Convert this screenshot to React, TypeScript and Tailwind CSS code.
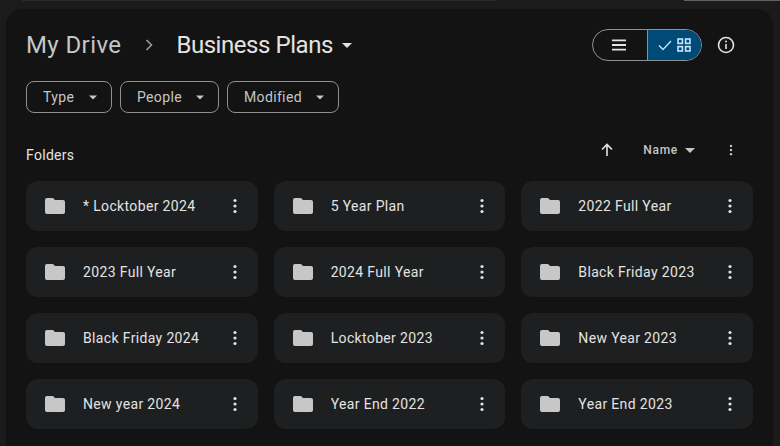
const folders = ["* Locktober 2024","5 Year Plan","2022 Full Year","2023 Full Year","2024 Full Year","Black Friday 2023","Black Friday 2024","Locktober 2023","New Year 2023","New year 2024","Year End 2022","Year End 2023"];

function Caret({ className = "" }: { className?: string }) {
  return <svg width="10" height="5" viewBox="0 0 10 5" className={className} fill="currentColor"><path d="M0 0h10L5 5z" /></svg>;
}
function Dots({ className = "" }: { className?: string }) {
  return (
    <svg width="24" height="24" viewBox="0 0 24 24" className={className} fill="currentColor">
      <circle cx="12" cy="6.5" r="1.6" /><circle cx="12" cy="12" r="1.6" /><circle cx="12" cy="17.5" r="1.6" />
    </svg>
  );
}
function Filter({ label, w }: { label: string; w: string }) {
  return (
    <div className={`flex h-8 items-center justify-between rounded-lg border border-[#8e918f] pl-4 pr-[14px] text-sm tracking-[0.35px] text-[#c4c7c5] ${w}`}>
      <span>{label}</span>
      <Caret className="w-2 text-[#c4c7c5]" />
    </div>
  );
}

export default function App() {
  return (
    <div className="h-[446px] w-[780px] overflow-hidden bg-[#1b1b1b] font-['Roboto',sans-serif]">
      <div className="flex h-px">
        <div className="ml-[22px] w-[473px] bg-[#2a2b2c]" />
        <div className="ml-auto w-[96px] bg-[#5f6368]" />
      </div>
      <div className="ml-[6px] mt-2 h-[437px] w-[767px] rounded-t-2xl bg-[#131314] pl-5 pr-5">
        <div className="flex h-[72px] items-center pb-[1px] pt-[1px]">
          <span className="text-2xl tracking-[0.4px] text-[#c4c7c5]">My Drive</span>
          <svg width="12" height="12" viewBox="0 0 12 12" className="ml-[22px] text-[#9aa0a6]" fill="none" stroke="currentColor" strokeWidth="1.5"><path d="M3.5 1 8.5 6l-5 5" /></svg>
          <span className="ml-[21px] text-2xl tracking-[-0.45px] text-[#e3e3e3]">Business Plans</span>
          <Caret className="ml-[9px] text-[#e3e3e3]" />
          <div className="ml-auto mr-[16px] flex items-center">
            <div className="flex h-8 w-[110px] overflow-hidden rounded-full border border-[#8e918f]">
              <div className="flex w-[55px] items-center justify-center border-r border-[#8e918f] pr-[2px]">
                <svg width="16" height="14" viewBox="0 0 16 14" className="text-[#e3e3e3]" fill="currentColor"><path d="M1 1.5h14V3.2H1zM1 6.1h14v1.8H1zM1 10.8h14v1.7H1z" /></svg>
              </div>
              <div className="flex flex-1 items-center justify-center gap-[5px] bg-[#004a77] text-[#c2e7ff]">
                <svg width="14" height="12" viewBox="0 0 14 12" fill="none" stroke="currentColor" strokeWidth="1.3"><path d="M1 6.5 5 10.5 13 2" /></svg>
                <svg width="14" height="14" viewBox="0 0 14 14" fill="none" stroke="currentColor" strokeWidth="1.6"><rect x="1" y="1" width="4.4" height="4.4" /><rect x="8.6" y="1" width="4.4" height="4.4" /><rect x="1" y="8.6" width="4.4" height="4.4" /><rect x="8.6" y="8.6" width="4.4" height="4.4" /></svg>
              </div>
            </div>
            <svg width="18" height="18" viewBox="0 0 18 18" className="ml-[15px] mr-[2px] text-[#e3e3e3]" fill="none" stroke="currentColor" strokeWidth="1.6">
              <circle cx="9" cy="9" r="7.5" /><path d="M9 8v5" /><circle cx="9" cy="5.4" r="1" fill="currentColor" stroke="none" />
            </svg>
          </div>
        </div>
        <div className="flex gap-2">
          <Filter label="Type" w="w-[86px]" />
          <Filter label="People" w="w-[99px]" />
          <Filter label="Modified" w="w-[112px]" />
        </div>
        <div className="flex h-[68px] items-center pt-[5px]">
          <span className="mt-[11px] text-sm tracking-[0.3px] text-[#e3e3e3]">Folders</span>
          <div className="ml-auto mr-[7px] mt-px flex items-center text-[#c4c7c5]">
            <svg width="14" height="14" viewBox="0 0 14 14" className="text-[#e3e3e3]" fill="none" stroke="currentColor" strokeWidth="1.6"><path d="M7 13V2M2 6.5 7 1.5l5 5" /></svg>
            <span className="ml-[29px] text-xs font-medium tracking-[0.7px] text-[#c4c7c5]">Name</span>
            <Caret className="ml-[7px] text-[#c4c7c5]" />
            <Dots className="ml-6 mr-[3px] scale-75 text-[#c4c7c5]" />
          </div>
        </div>
        <div className="grid grid-cols-3 gap-4">
          {folders.map((f) => (
            <div key={f} className="flex h-[50px] items-center rounded-xl bg-[#1e1f20] pl-[19px] pr-[11px]">
              <svg width="20" height="16" viewBox="0 0 20 16" className="shrink-0 text-[#c7c7c7]" fill="currentColor">
                <path d="M2 0h6l2 2h8a2 2 0 0 1 2 2v10a2 2 0 0 1-2 2H2a2 2 0 0 1-2-2V2a2 2 0 0 1 2-2z" />
              </svg>
              <span className="ml-[18px] flex-1 truncate text-sm font-[450] tracking-[0.35px] text-[#e3e3e3]">{f}</span>
              <Dots className="shrink-0 text-[#e3e3e3]" />
            </div>
          ))}
        </div>
      </div>
    </div>
  );
}
